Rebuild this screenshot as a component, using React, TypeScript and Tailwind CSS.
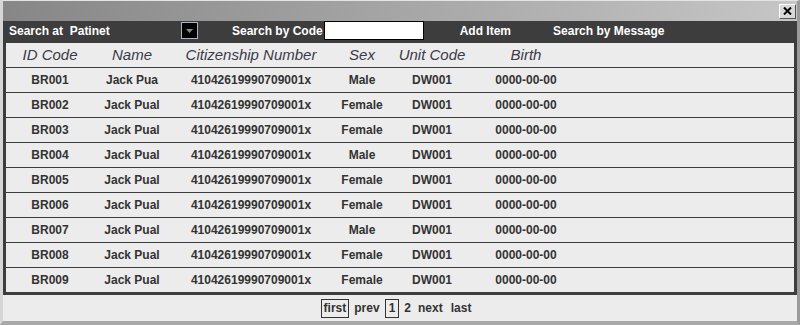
import React from "react";

type Row = {
  id: string;
  name: string;
  citizen: string;
  sex: string;
  unit: string;
  birth: string;
};

const rows: Row[] = [
  { id: "BR001", name: "Jack Pua", citizen: "41042619990709001x", sex: "Male", unit: "DW001", birth: "0000-00-00" },
  { id: "BR002", name: "Jack Pual", citizen: "41042619990709001x", sex: "Female", unit: "DW001", birth: "0000-00-00" },
  { id: "BR003", name: "Jack Pual", citizen: "41042619990709001x", sex: "Female", unit: "DW001", birth: "0000-00-00" },
  { id: "BR004", name: "Jack Pual", citizen: "41042619990709001x", sex: "Male", unit: "DW001", birth: "0000-00-00" },
  { id: "BR005", name: "Jack Pual", citizen: "41042619990709001x", sex: "Female", unit: "DW001", birth: "0000-00-00" },
  { id: "BR006", name: "Jack Pual", citizen: "41042619990709001x", sex: "Female", unit: "DW001", birth: "0000-00-00" },
  { id: "BR007", name: "Jack Pual", citizen: "41042619990709001x", sex: "Male", unit: "DW001", birth: "0000-00-00" },
  { id: "BR008", name: "Jack Pual", citizen: "41042619990709001x", sex: "Female", unit: "DW001", birth: "0000-00-00" },
  { id: "BR009", name: "Jack Pual", citizen: "41042619990709001x", sex: "Female", unit: "DW001", birth: "0000-00-00" },
];

// column widths shared by header and rows
const cols = "grid grid-cols-[88px_76px_162px_60px_80px_108px_1fr]";

export default function App() {
  return (
    <div
      className="w-[800px] h-[325px] flex flex-col bg-[#ececec] border-t border-l-[3px] border-r-[3px] border-b-[4px] border-t-[#e4e4e4] border-l-[#d6d6d6] border-r-[#9a9a9a] border-b-[#a8a8a8] text-[12px] font-bold text-[#333]"
      style={{ fontFamily: '"Liberation Sans", Arial, sans-serif' }}
    >
      {/* Title bar */}
      <div className="h-[20px] shrink-0 flex items-center justify-end pr-[1px] bg-gradient-to-r from-[#878787] to-[#c6c6c6]">
        <button className="w-[17px] h-[15px] flex items-center justify-center bg-[#d8d8d8] border border-t-white border-l-white border-r-[#555] border-b-[#555]">
          <svg width="9" height="8" viewBox="0 0 9 8">
            <path d="M1 0.5 L8 7.5 M8 0.5 L1 7.5" stroke="#000" strokeWidth="2" />
          </svg>
        </button>
      </div>

      {/* Toolbar */}
      <div className="h-[19px] shrink-0 flex items-center bg-[#3d3d3d] text-white">
        <span className="ml-[6px] w-[172px] whitespace-pre">Search at  Patinet</span>
        <button className="w-[17px] h-[17px] flex items-center justify-center bg-black border border-[#a8b4c4]">
          <svg width="7" height="4" viewBox="0 0 7 4">
            <path d="M0 0 H7 L3.5 4 Z" fill="#8a8a8a" />
          </svg>
        </button>
        <span className="ml-[34px]">Search by Code</span>
        <input className="ml-[1px] w-[100px] h-[19px] bg-white border border-black outline-none" />
        <span className="ml-[36px]">Add Item</span>
        <span className="ml-[42px]">Search by Message</span>
      </div>

      {/* Table */}
      <div className="shrink-0 border-[3px] border-[#3d3d3d] bg-[#ececec]">
        <div className={`${cols} h-[24px] items-center text-[15px] font-normal italic text-[#3a3a48]`}>
          <span className="text-center">ID Code</span>
          <span className="text-center">Name</span>
          <span className="text-center">Citizenship Number</span>
          <span className="text-center">Sex</span>
          <span className="text-center">Unit Code</span>
          <span className="text-center">Birth</span>
          <span />
        </div>
        {rows.map((r) => (
          <div key={r.id} className={`${cols} h-[25px] items-center border-t border-[#3d3d3d]`}>
            <span className="text-center">{r.id}</span>
            <span className="text-center">{r.name}</span>
            <span className="text-center">{r.citizen}</span>
            <span className="text-center">{r.sex}</span>
            <span className="text-center">{r.unit}</span>
            <span className="text-center">{r.birth}</span>
            <span />
          </div>
        ))}
      </div>

      {/* Pagination */}
      <div className="flex-1 flex items-center justify-center gap-[5px] pr-[8px]">
        <span className="border border-[#333] px-[2px] leading-[17px]">first</span>
        <span>prev</span>
        <span className="border border-[#333] px-[3px] leading-[17px]">1</span>
        <span>2</span>
        <span className="ml-[2px]">next</span>
        <span className="ml-[3px]">last</span>
      </div>
    </div>
  );
}
